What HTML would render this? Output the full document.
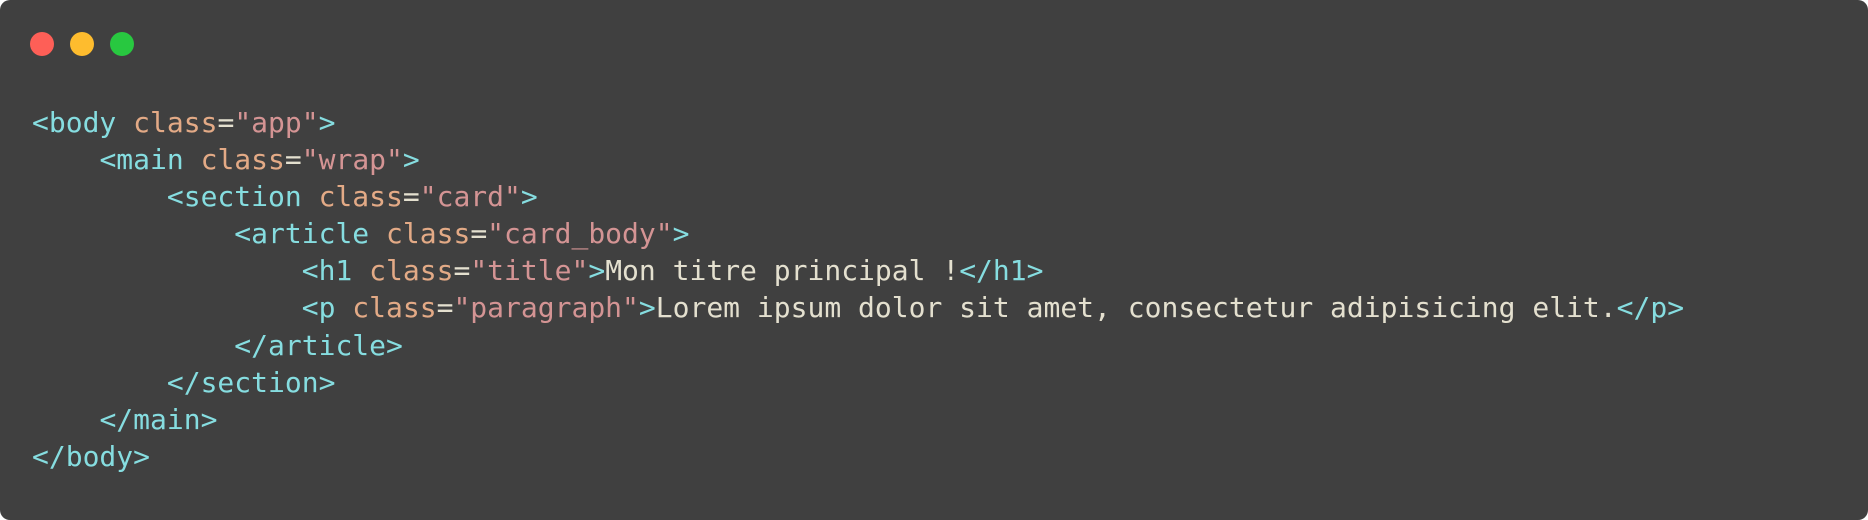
<!DOCTYPE html>
<html><head><style>
html,body{margin:0;padding:0;background:#fff;}
.win{position:absolute;left:0;top:0;width:1868px;height:520px;background:#404040;border-radius:10px;overflow:hidden;}
.dot{position:absolute;top:32px;width:24px;height:24px;border-radius:50%;}
pre{position:absolute;left:32px;top:104px;margin:0;font-family:"DejaVu Sans Mono","Liberation Mono",monospace;font-size:28px;line-height:37.1px;color:#e4e0cf;}
.t{color:#86dde0}.a{color:#e3aa86}.s{color:#d49494}.e{color:#e4e0cf}
</style></head><body>
<div class="win">
<div class="dot" style="left:30px;background:#fe5f57"></div>
<div class="dot" style="left:70px;background:#febc2e"></div>
<div class="dot" style="left:110px;background:#28c840"></div>
<pre><span class="t">&lt;body</span> <span class="a">class</span><span class="e">=</span><span class="s">"app"</span><span class="t">&gt;</span>
    <span class="t">&lt;main</span> <span class="a">class</span><span class="e">=</span><span class="s">"wrap"</span><span class="t">&gt;</span>
        <span class="t">&lt;section</span> <span class="a">class</span><span class="e">=</span><span class="s">"card"</span><span class="t">&gt;</span>
            <span class="t">&lt;article</span> <span class="a">class</span><span class="e">=</span><span class="s">"card_body"</span><span class="t">&gt;</span>
                <span class="t">&lt;h1</span> <span class="a">class</span><span class="e">=</span><span class="s">"title"</span><span class="t">&gt;</span>Mon titre principal !<span class="t">&lt;/h1&gt;</span>
                <span class="t">&lt;p</span> <span class="a">class</span><span class="e">=</span><span class="s">"paragraph"</span><span class="t">&gt;</span>Lorem ipsum dolor sit amet, consectetur adipisicing elit.<span class="t">&lt;/p&gt;</span>
            <span class="t">&lt;/article&gt;</span>
        <span class="t">&lt;/section&gt;</span>
    <span class="t">&lt;/main&gt;</span>
<span class="t">&lt;/body&gt;</span></pre>
</div>
</body></html>
